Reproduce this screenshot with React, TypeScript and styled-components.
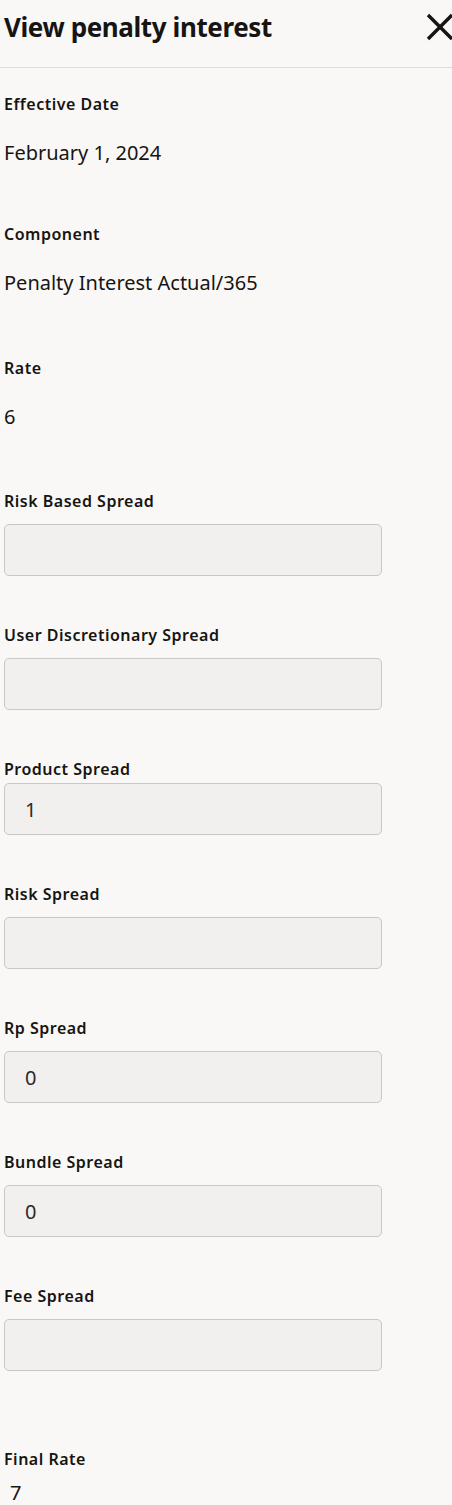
import React from 'react';
import styled, { createGlobalStyle } from 'styled-components';

const GlobalStyle = createGlobalStyle`
  html, body {
    margin: 0;
    padding: 0;
    background: #f9f8f6;
  }
  body {
    font-family: 'Noto Sans', 'Liberation Sans', sans-serif;
    color: #161513;
  }
`;

type FieldItem = {
  label: string;
  value?: string;
  kind: 'text' | 'input';
  gap?: number;
  labelGap?: number;
  valueIndent?: number;
};

const fields: FieldItem[] = [
  { label: 'Effective Date', value: 'February 1, 2024', kind: 'text', gap: 0 },
  { label: 'Component', value: 'Penalty Interest Actual/365', kind: 'text', gap: 57 },
  { label: 'Rate', value: '6', kind: 'text', gap: 61 },
  { label: 'Risk Based Spread', kind: 'input', gap: 60 },
  { label: 'User Discretionary Spread', kind: 'input', gap: 49 },
  { label: 'Product Spread', value: '1', kind: 'input', gap: 49, labelGap: 4 },
  { label: 'Risk Spread', kind: 'input', gap: 49 },
  { label: 'Rp Spread', value: '0', kind: 'input', gap: 49 },
  { label: 'Bundle Spread', value: '0', kind: 'input', gap: 49 },
  { label: 'Fee Spread', kind: 'input', gap: 49 },
  { label: 'Final Rate', value: '7', kind: 'text', gap: 78, labelGap: 10, valueIndent: 6 },
];

function CloseIcon() {
  return (
    <svg width="28" height="28" viewBox="0 0 28 28" fill="none">
      <path d="M2 2 L26 26 M26 2 L2 26" stroke="#161513" strokeWidth="3.4" />
    </svg>
  );
}

function App() {
  return (
    <Page>
      <GlobalStyle />
      <Header>
        <Title>View penalty interest</Title>
        <CloseButton aria-label="Close">
          <CloseIcon />
        </CloseButton>
      </Header>
      <Body>
        {fields.map((f) => (
          <Field key={f.label} $gap={f.gap ?? 49}>
            <Label>{f.label}</Label>
            {f.kind === 'text' ? (
              <Value $gap={f.labelGap ?? 25} $indent={f.valueIndent ?? 0}>
                {f.value}
              </Value>
            ) : (
              <ReadonlyInput $gap={f.labelGap ?? 13}>{f.value}</ReadonlyInput>
            )}
          </Field>
        ))}
      </Body>
    </Page>
  );
}

const Page = styled.div`
  width: 452px;
  min-height: 1505px;
  background: #f9f8f6;
`;

const Header = styled.header`
  height: 68px;
  box-sizing: border-box;
  display: flex;
  align-items: center;
  justify-content: space-between;
  padding: 0 0 14px 4px;
  border-bottom: 1px solid #dedcda;
`;

const Title = styled.h1`
  margin: 0;
  font-size: 26px;
  font-weight: 700;
  letter-spacing: -0.4px;
  line-height: 32px;
`;

const CloseButton = styled.button`
  background: none;
  border: none;
  padding: 0;
  width: 28px;
  height: 28px;
  margin-right: -2px;
  display: flex;
  cursor: pointer;
`;

const Body = styled.main`
  padding: 26px 4px 0;
`;

const Field = styled.div<{ $gap: number }>`
  display: flex;
  flex-direction: column;
  margin-top: ${(p) => p.$gap}px;
`;

const Label = styled.label`
  font-size: 16px;
  font-weight: 600;
  line-height: 20px;
  letter-spacing: 0.5px;
`;

const Value = styled.div<{ $gap: number; $indent: number }>`
  margin-top: ${(p) => p.$gap}px;
  padding-left: ${(p) => p.$indent}px;
  font-size: 20px;
  line-height: 28px;
  letter-spacing: 0;
`;

const ReadonlyInput = styled.div<{ $gap: number }>`
  margin-top: ${(p) => p.$gap}px;
  width: 378px;
  height: 52px;
  box-sizing: border-box;
  background: #f1f0ee;
  border: 1px solid #c9c7c4;
  border-radius: 5px;
  padding-left: 20px;
  display: flex;
  align-items: center;
  font-size: 20px;
  color: #2b2927;
`;

export default App;
